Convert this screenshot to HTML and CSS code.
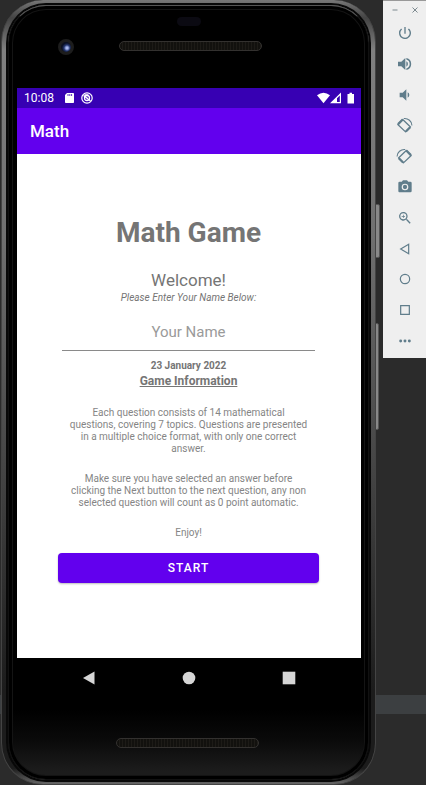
FILE: index.html
```html
<!DOCTYPE html>
<html lang="en">
<head>
<meta charset="utf-8">
<meta name="viewport" content="width=device-width, initial-scale=1">
<title>Math</title>
<link rel="stylesheet" href="styles.css">
</head>
<body>
<div class="desktop">
  <div class="device">
    <span class="side-key side-key-power"></span>
    <span class="side-key side-key-volume"></span>
    <div class="frame">
      <div class="face">
        <div class="forehead">
          <span class="sensor"></span>
          <span class="camera"></span>
          <span class="speaker"></span>
        </div>
        <div class="screen">
          <div class="status-bar">
            <span>10:08</span>
            <svg class="status-icon" viewBox="0 0 12 12"><path fill="#fff" d="M4 1h6.200q.8 0 .8.800v8.400q0 .8-.8.800H2.800q-.8 0-.8-.8V3z"/><path stroke="#3700b3" stroke-width=".8" d="M5 2v2M6.800 2v2M8.600 2v2"/></svg>
            <svg class="status-icon" viewBox="0 0 12 12" fill="none" stroke="#fff"><circle cx="6" cy="6" r="5.200" stroke-width="1.200"/><circle cx="6" cy="6" r="2.500" stroke-width="1.300"/><path stroke-width="1.200" d="M2.500 3.500 9.500 9M3.500 2.800h4M5.500 5.500 7 7"/></svg>
            <span class="status-spacer"></span>
            <svg class="signals" viewBox="0 0 38 12" fill="#fff"><path d="M0 3.200Q6.500-1.800 13 3.200L6.500 11.200z"/><path fill-rule="evenodd" d="M13 11.200 24 .5v10.700zm7-1.200h2.800V3.600L20 6.300z"/><path d="M30.500 2h2V.8h2.500V2h2v9.500h-6.500z"/></svg>
          </div>
          <header class="app-bar"><h1>Math</h1></header>
          <main class="content">
            <h2 class="title">Math Game</h2>
            <p class="welcome">Welcome!</p>
            <label class="prompt" for="player">Please Enter Your Name Below:</label>
            <input class="name-field" id="player" type="text" placeholder="Your Name">
            <p class="date">23 January 2022</p>
            <h3 class="subtitle">Game Information</h3>
            <p class="info">Each question consists of 14 mathematical<br>questions, covering 7 topics. Questions are presented<br>in a multiple choice format, with only one correct<br>answer.</p>
            <p class="info">Make sure you have selected an answer before<br>clicking the Next button to the next question, any non<br>selected question will count as 0 point automatic.</p>
            <p class="info">Enjoy!</p>
            <button class="start" type="button">START</button>
          </main>
        </div>
        <nav class="nav-bar">
          <button type="button" aria-label="Back"><svg viewBox="0 0 14 14"><path d="M1 7 12.500.5v13z"/></svg></button>
          <button type="button" aria-label="Home"><svg viewBox="0 0 14 14"><circle cx="7" cy="7" r="6.300"/></svg></button>
          <button type="button" aria-label="Overview"><svg viewBox="0 0 14 14"><path d="M.7.700h12.600v12.600H.7z"/></svg></button>
        </nav>
        <div class="chin"><span class="speaker"></span></div>
      </div>
    </div>
  </div>
  <aside class="toolbar">
    <div class="window-keys">
      <button type="button" aria-label="Minimize"><svg viewBox="0 0 8 8"><path d="M1.500 4h5"/></svg></button>
      <button type="button" aria-label="Close"><svg viewBox="0 0 8 8"><path d="m1.500 1.500 5 5m0-5-5 5"/></svg></button>
    </div>
    <button type="button" aria-label="Power"><svg viewBox="0 0 24 24"><path d="M13 3h-2v10h2V3zm4.830 2.170-1.420 1.420A6.920 6.920 0 0 1 19 12a7 7 0 1 1-11.420-5.420L6.170 5.170A8.930 8.930 0 0 0 3 12a9 9 0 1 0 14.830-6.830z"/></svg></button>
    <button type="button" aria-label="Volume up"><svg viewBox="0 0 24 24"><path d="M1.500 8.500v7h5l6 5.500V3l-6 5.500h-5zM14 8v8a4.500 4.500 0 0 0 0-8zm0-5v2.300a7 7 0 0 1 0 13.400V21a9.200 9.200 0 0 0 0-18z"/></svg></button>
    <button type="button" aria-label="Volume down"><svg viewBox="0 0 24 24"><path d="M18.500 12A4.500 4.500 0 0 0 16 7.970v8.050A4.470 4.470 0 0 0 18.500 12zM4 8.500v7h4.500l5.500 5V3.500l-5.500 5H4z"/></svg></button>
    <button type="button" aria-label="Rotate left"><svg class="wide" viewBox="0 0 24 24"><g fill="none" stroke="#607d8b" stroke-linejoin="round"><path stroke-width="1.800" d="m9.500 3.500 11 10.500-7 7-11-10.500z"/><path stroke-width="3.200" d="m3 10 6.500-6.500M14 20.500l6-6"/><path stroke-width="1.500" d="M11 2.200C17 1.500 22.500 6 22.500 12"/></g></svg></button>
    <button type="button" aria-label="Rotate right"><svg class="wide" viewBox="0 0 24 24"><g fill="none" stroke="#607d8b" stroke-linejoin="round"><path stroke-width="1.800" d="m14.500 3.500-11 10.500 7 7 11-10.500z"/><path stroke-width="3.200" d="m21 10-6.500-6.500M10 20.500l-6-6"/><path stroke-width="1.500" d="M13 2.200C7 1.500 1.500 6 1.500 12"/></g></svg></button>
    <button type="button" aria-label="Take screenshot"><svg viewBox="0 0 24 24"><circle cx="12" cy="12" r="3.200"/><path d="M9 2 7.170 4H4a2 2 0 0 0-2 2v12c0 1.100.9 2 2 2h16a2 2 0 0 0 2-2V6a2 2 0 0 0-2-2h-3.170L15 2H9zm3 15a5 5 0 1 1 0-10 5 5 0 0 1 0 10z"/></svg></button>
    <button type="button" aria-label="Zoom"><svg viewBox="0 0 24 24"><path d="M15.500 14h-.79l-.28-.27A6.500 6.500 0 1 0 13.730 14.430l.27.280v.79l5 4.990L20.490 19l-4.990-5zm-6 0a4.500 4.500 0 1 1 0-9 4.500 4.500 0 0 1 0 9zm2.500-4h-2v2H9v-2H7V9h2V7h1v2h2v1z"/></svg></button>
    <button type="button" aria-label="Back"><svg viewBox="0 0 24 24"><path fill="none" stroke="#607d8b" stroke-width="1.800" d="M5.500 12 17.500 5v14z"/></svg></button>
    <button type="button" aria-label="Home"><svg viewBox="0 0 24 24"><circle cx="12" cy="12" r="7" fill="none" stroke="#607d8b" stroke-width="1.800"/></svg></button>
    <button type="button" aria-label="Overview"><svg viewBox="0 0 24 24"><path fill="none" stroke="#607d8b" stroke-width="1.800" d="M5.500 5.500h13v13h-13z"/></svg></button>
    <button type="button" aria-label="More"><svg viewBox="0 0 24 24"><circle cx="5.500" cy="12" r="2.200"/><circle cx="12" cy="12" r="2.200"/><circle cx="18.500" cy="12" r="2.200"/></svg></button>
  </aside>
</div>
</body>
</html>
```
FILE: styles.css
```css
* {
  box-sizing: border-box;
}

body {
  margin: 0;
  background: #2b2b2b;
  font-family: Roboto, "Liberation Sans", sans-serif;
}

h1, h2, h3, p {
  margin: 0;
}

button {
  padding: 0;
  border: 0;
  background: none;
  font: inherit;
}

svg {
  display: block;
}

.desktop {
  display: flex;
  align-items: flex-start;
  gap: 7px;
  min-height: 100vh;
  padding-left: 1px;
  background: linear-gradient(transparent 695px, #3c3f41 695px, #3c3f41 714px, transparent 714px);
}

.device {
  position: relative;
  flex: 1;
}

.side-key {
  position: absolute;
  right: -4px;
  width: 5px;
  border: 1px solid #555;
  border-radius: 0 2px 2px 0;
  background: #888;
}

.side-key-power {
  top: 204px;
  height: 54px;
}

.side-key-volume {
  top: 323px;
  right: -3px;
  height: 107px;
}

.frame {
  position: relative;
  padding: 5px 6px 4px;
  border: 1px solid #444;
  border-width: 0 1px 1px;
  border-radius: 42px;
  background: linear-gradient(#777, #444 18px, #808080 50px, #707070 30%, #444 60%, #1c1c1c 88%, #1c1c1c 98%, #666);
}

.face {
  padding: 0 7px 0 8px;
  border: 1px solid #111;
  border-top-color: #555;
  border-radius: 38px;
  background: linear-gradient(#000 91%, #0a0a0a 95%, #1c1c1c 99%);
  box-shadow: 0 0 0 2px #080808, inset 0 0 0 3px #000, inset 0 0 0 4px #141414;
}

.forehead {
  position: relative;
  display: flex;
  justify-content: center;
  height: 82px;
  padding: 35px 0 0 2px;
}

.sensor {
  position: absolute;
  top: 11px;
  left: 50%;
  width: 24px;
  height: 9px;
  margin-left: -12px;
  border-radius: 5px;
  background: #0b0a12;
}

.camera {
  position: absolute;
  top: 33px;
  left: 41px;
  width: 16px;
  height: 16px;
  border: 3px solid #1d1d1d;
  border-radius: 50%;
  background: radial-gradient(circle at 60% 60%, #a8b8f0 0 1px, #24366f 3px, #0b1022 5px);
}

.speaker {
  width: 143px;
  height: 10px;
  border: 1px solid #33312f;
  border-radius: 5px;
  background: repeating-linear-gradient(90deg, #12110e 0 2px, #1d1b17 2px 3px);
}

.screen {
  background: #fff;
}

.status-bar {
  display: flex;
  align-items: center;
  gap: 6px;
  height: 20px;
  padding: 0 6px 0 7px;
  background: #3700b3;
  color: #fff;
  font-size: 12px;
  line-height: 20px;
}

.status-icon {
  width: 12px;
  height: 12px;
}

.status-bar span + .status-icon {
  margin-left: 3px;
}

.status-spacer {
  flex: 1;
}

.signals {
  width: 38px;
  height: 12px;
}

.app-bar {
  height: 46px;
  padding: 0 13px;
  background: #6200ee;
  color: #fff;
}

.app-bar h1 {
  font-size: 17px;
  font-weight: 500;
  line-height: 47px;
}

.content {
  display: flex;
  flex-direction: column;
  padding: 59px 42px 75px 41px;
  color: #757575;
  text-align: center;
}

.title {
  font-size: 28px;
  font-weight: 700;
  line-height: 40px;
}

.welcome {
  margin-top: 16px;
  font-size: 17px;
  line-height: 22px;
}

.prompt {
  font-size: 10px;
  font-style: italic;
  line-height: 13px;
}

.name-field {
  height: 34px;
  margin: 13px 4px 0;
  padding: 0 0 4px;
  border: 0;
  border-bottom: 1px solid #8a8a8a;
  border-radius: 0;
  background: none;
  color: #222;
  font: 15px Roboto, "Liberation Sans", sans-serif;
  text-align: center;
}

.name-field::placeholder {
  color: #9a9a9a;
}

.date {
  margin-top: 8px;
  font-size: 10px;
  font-weight: 700;
  line-height: 14px;
}

.subtitle {
  font-size: 12px;
  font-weight: 700;
  line-height: 16px;
  text-decoration: underline;
}

.info {
  margin-top: 18px;
  color: #858585;
  font-size: 10px;
  line-height: 12px;
  white-space: nowrap;
}

.start {
  height: 30px;
  margin-top: 14px;
  border-radius: 4px;
  background: #6200ee;
  box-shadow: 0 1px 2px #0004;
  color: #fff;
  font-size: 12px;
  font-weight: 500;
  letter-spacing: 1px;
}

.nav-bar {
  display: flex;
  justify-content: space-around;
  height: 40px;
  padding: 0 22px;
}

.nav-bar svg {
  width: 14px;
  height: 14px;
  fill: #d6d6d6;
}

.chin {
  display: flex;
  justify-content: center;
  height: 81px;
  padding: 40px 3px 0 0;
}

.toolbar {
  display: flex;
  flex-direction: column;
  width: 43px;
  height: 358px;
  padding-bottom: 2px;
  border-top: 1px solid #999;
  background: #efefef;
}

.toolbar > button {
  display: flex;
  flex: 1;
  align-items: center;
  justify-content: center;
}

.toolbar > button svg {
  width: 16px;
  height: 16px;
  fill: #607d8b;
}

.toolbar > button .wide {
  width: 17px;
  height: 17px;
}

.window-keys {
  display: flex;
  justify-content: space-between;
  height: 17px;
  padding: 0 7px 0 8px;
}

.window-keys svg {
  width: 8px;
  height: 8px;
  fill: none;
  stroke: #7c898f;
}
```
